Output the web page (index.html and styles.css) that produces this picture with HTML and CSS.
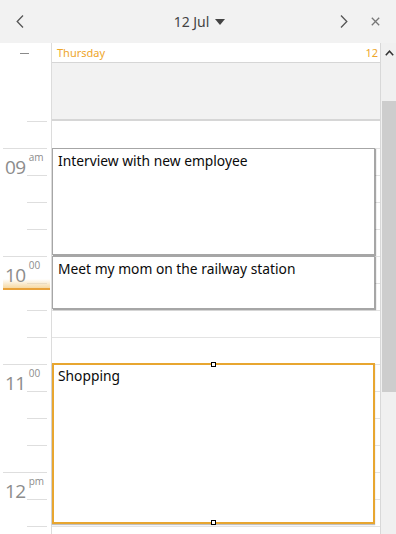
FILE: index.html
```html
<!DOCTYPE html>
<html>
<head>
<meta charset="utf-8">
<link rel="stylesheet" href="styles.css">
</head>
<body>
<div class="app">
  <header class="toolbar">
    <div class="tb-left">
      <button class="icon-btn prev" aria-label="Previous">
        <svg width="8" height="13" viewBox="0 0 8 13"><path d="M7 0.5 L1.2 6.5 L7 12.5" fill="none" stroke="#555" stroke-width="1.3"/></svg>
      </button>
    </div>
    <div class="title">12 Jul <span class="caret"></span></div>
    <div class="tb-right">
      <button class="icon-btn next" aria-label="Next">
        <svg width="8" height="13" viewBox="0 0 8 13"><path d="M1 0.5 L6.8 6.5 L1 12.5" fill="none" stroke="#555" stroke-width="1.3"/></svg>
      </button>
      <button class="icon-btn close" aria-label="Close">
        <svg width="9" height="9" viewBox="0 0 9 9"><path d="M0.8 0.8 L8.2 8.2 M8.2 0.8 L0.8 8.2" fill="none" stroke="#777" stroke-width="1.3"/></svg>
      </button>
    </div>
  </header>
  <div class="content">
    <div class="ruler">
      <div class="ruler-top"><span class="collapse-dash"></span></div>
      <div class="ruler-grid">
        <div class="tick q"></div>
        <div class="tick h"><span class="hh">09</span><span class="sup">am</span></div>
        <div class="tick q"></div>
        <div class="tick q"></div>
        <div class="tick q"></div>
        <div class="tick h"><span class="hh">10</span><span class="sup">00</span></div>
        <div class="tick q"></div>
        <div class="tick q"></div>
        <div class="tick q"></div>
        <div class="tick h"><span class="hh">11</span><span class="sup">00</span></div>
        <div class="tick q"></div>
        <div class="tick q"></div>
        <div class="tick q"></div>
        <div class="tick h"><span class="hh">12</span><span class="sup">pm</span></div>
        <div class="tick q"></div>
        <div class="tick q"></div>
        <div class="now"></div>
      </div>
    </div>
    <div class="day">
      <div class="day-head"><span class="dname">Thursday</span><span class="dnum">12</span></div>
      <div class="allday"></div>
      <div class="day-grid">
        <div class="slot"></div><div class="slot"></div><div class="slot"></div><div class="slot"></div>
        <div class="slot"></div><div class="slot"></div><div class="slot"></div><div class="slot"></div>
        <div class="slot"></div><div class="slot"></div><div class="slot"></div><div class="slot"></div>
        <div class="slot"></div><div class="slot"></div><div class="slot"></div><div class="slot"></div>
        <div class="event ev1">Interview with new employee</div>
        <div class="event ev2">Meet my mom on the railway station</div>
        <div class="event ev3 selected">Shopping<span class="handle top"></span><span class="handle bottom"></span></div>
      </div>
    </div>
    <div class="scrollbar">
      <div class="sb-up">
        <svg width="9" height="6" viewBox="0 0 9 6"><path d="M0.8 5.2 L4.5 1.2 L8.2 5.2" fill="none" stroke="#333" stroke-width="1.5"/></svg>
      </div>
      <div class="sb-track"><div class="sb-thumb"></div></div>
    </div>
  </div>
</div>
</body>
</html>
```
FILE: styles.css
```css
html, body {
  margin: 0;
  padding: 0;
}
body {
  width: 396px;
  height: 534px;
  overflow: hidden;
  background: #ffffff;
  font-family: "Noto Sans", "Open Sans", sans-serif;
}
.app {
  display: flex;
  flex-direction: column;
  width: 396px;
  height: 534px;
}
.toolbar {
  height: 43px;
  flex: 0 0 43px;
  background: #f2f2f2;
  display: grid;
  grid-template-columns: 1fr auto 1fr;
  align-items: center;
}
.icon-btn {
  border: 0;
  background: transparent;
  padding: 0;
  margin: 0;
  display: flex;
  align-items: center;
  justify-content: center;
}
.icon-btn svg { display: block; }
.tb-left {
  display: flex;
  padding-left: 16px;
}
.tb-right {
  display: flex;
  justify-content: flex-end;
  align-items: center;
  padding-right: 16px;
  gap: 23px;
}
.title {
  display: flex;
  align-items: center;
  font-size: 14px;
  color: #444;
  padding-left: 3px;
}
.caret {
  width: 0;
  height: 0;
  margin-left: 6px;
  border-left: 5.5px solid transparent;
  border-right: 5.5px solid transparent;
  border-top: 6px solid #444;
}
.content {
  flex: 1;
  display: flex;
  overflow: hidden;
}
.ruler {
  width: 51px;
  flex: 0 0 51px;
  border-right: 1px solid #dcdcdc;
  display: flex;
  flex-direction: column;
}
.ruler-top {
  height: 78px;
  flex: 0 0 78px;
  display: flex;
  padding: 10px 0 0 20px;
  box-sizing: border-box;
}
.collapse-dash {
  width: 9px;
  height: 1px;
  background: #8a8a8a;
}
.ruler-grid {
  position: relative;
  flex: 1;
}
.tick {
  height: 27px;
  box-sizing: border-box;
  border-top: 1px solid #dedede;
  margin-right: 4px;
}
.tick.q { margin-left: 27px; }
.tick.h {
  margin-left: 3px;
  padding-left: 2px;
  display: flex;
  align-items: flex-start;
  color: #8c8c8c;
  position: relative;
  z-index: 1;
}
.hh {
  font-family: "Open Sans", "Noto Sans", sans-serif;
  font-weight: 400;
  font-size: 19px;
  line-height: 20px;
  margin-top: 8px;
  letter-spacing: -0.5px;
}
.sup {
  font-family: "Open Sans", "Noto Sans", sans-serif;
  font-size: 10px;
  line-height: 10px;
  margin-left: 3px;
  margin-top: 3px;
}
.now {
  position: absolute;
  left: 3px;
  width: 47px;
  top: 158px;
  height: 9px;
  background: linear-gradient(to bottom, rgba(250, 236, 210, 0), #f6d9a3);
  border-bottom: 2px solid #e9a23a;
}
.day {
  width: 328px;
  flex: 0 0 328px;
  border-right: 1px solid #d8d8d8;
  display: flex;
  flex-direction: column;
}
.day-head {
  height: 19px;
  flex: 0 0 19px;
  border-bottom: 1px solid #d6d6d6;
  display: flex;
  justify-content: space-between;
  align-items: center;
  padding: 0 2px 0 5px;
  font-size: 11px;
  color: #eea62a;
}
.allday {
  height: 56px;
  flex: 0 0 56px;
  background: #f2f2f2;
  border-bottom: 2px solid #d6d6d6;
}
.day-grid {
  position: relative;
  flex: 1;
}
.slot {
  height: 27px;
  box-sizing: border-box;
}
.slot + .slot {
  border-top: 1px solid #e3e3e3;
}
.event {
  position: absolute;
  left: 0;
  width: 323px;
  box-sizing: border-box;
  background: #ffffff;
  border: 1px solid #a6a6a6;
  box-shadow: 1px 1px 1px rgba(0, 0, 0, 0.35);
  font-size: 13.8px;
  line-height: 18px;
  color: #0a0a0a;
  padding: 3px 5px;
}
.ev1 { top: 27px; height: 107px; }
.ev2 { top: 135px; height: 53px; }
.ev3 {
  top: 242px;
  height: 161px;
  border: 2px solid #e8a630;
  padding: 2px 4px;
  box-shadow: 0 1px 1px rgba(0, 0, 0, 0.25);
}
.handle {
  position: absolute;
  left: 157px;
  width: 5px;
  height: 5px;
  box-sizing: border-box;
  border: 1px solid #000;
  background: #fff;
}
.handle.top { top: -3px; }
.handle.bottom { bottom: -3px; }
.scrollbar {
  flex: 1;
  display: flex;
  flex-direction: column;
  background: #f0f0f0;
}
.sb-up {
  height: 19px;
  flex: 0 0 19px;
  display: flex;
  align-items: center;
  justify-content: center;
  padding-left: 1px;
}
.sb-up svg { display: block; }
.sb-track {
  flex: 1;
  padding-top: 39px;
  padding-left: 1px;
}
.sb-thumb {
  height: 291px;
  background: #cdcdcd;
}
```
